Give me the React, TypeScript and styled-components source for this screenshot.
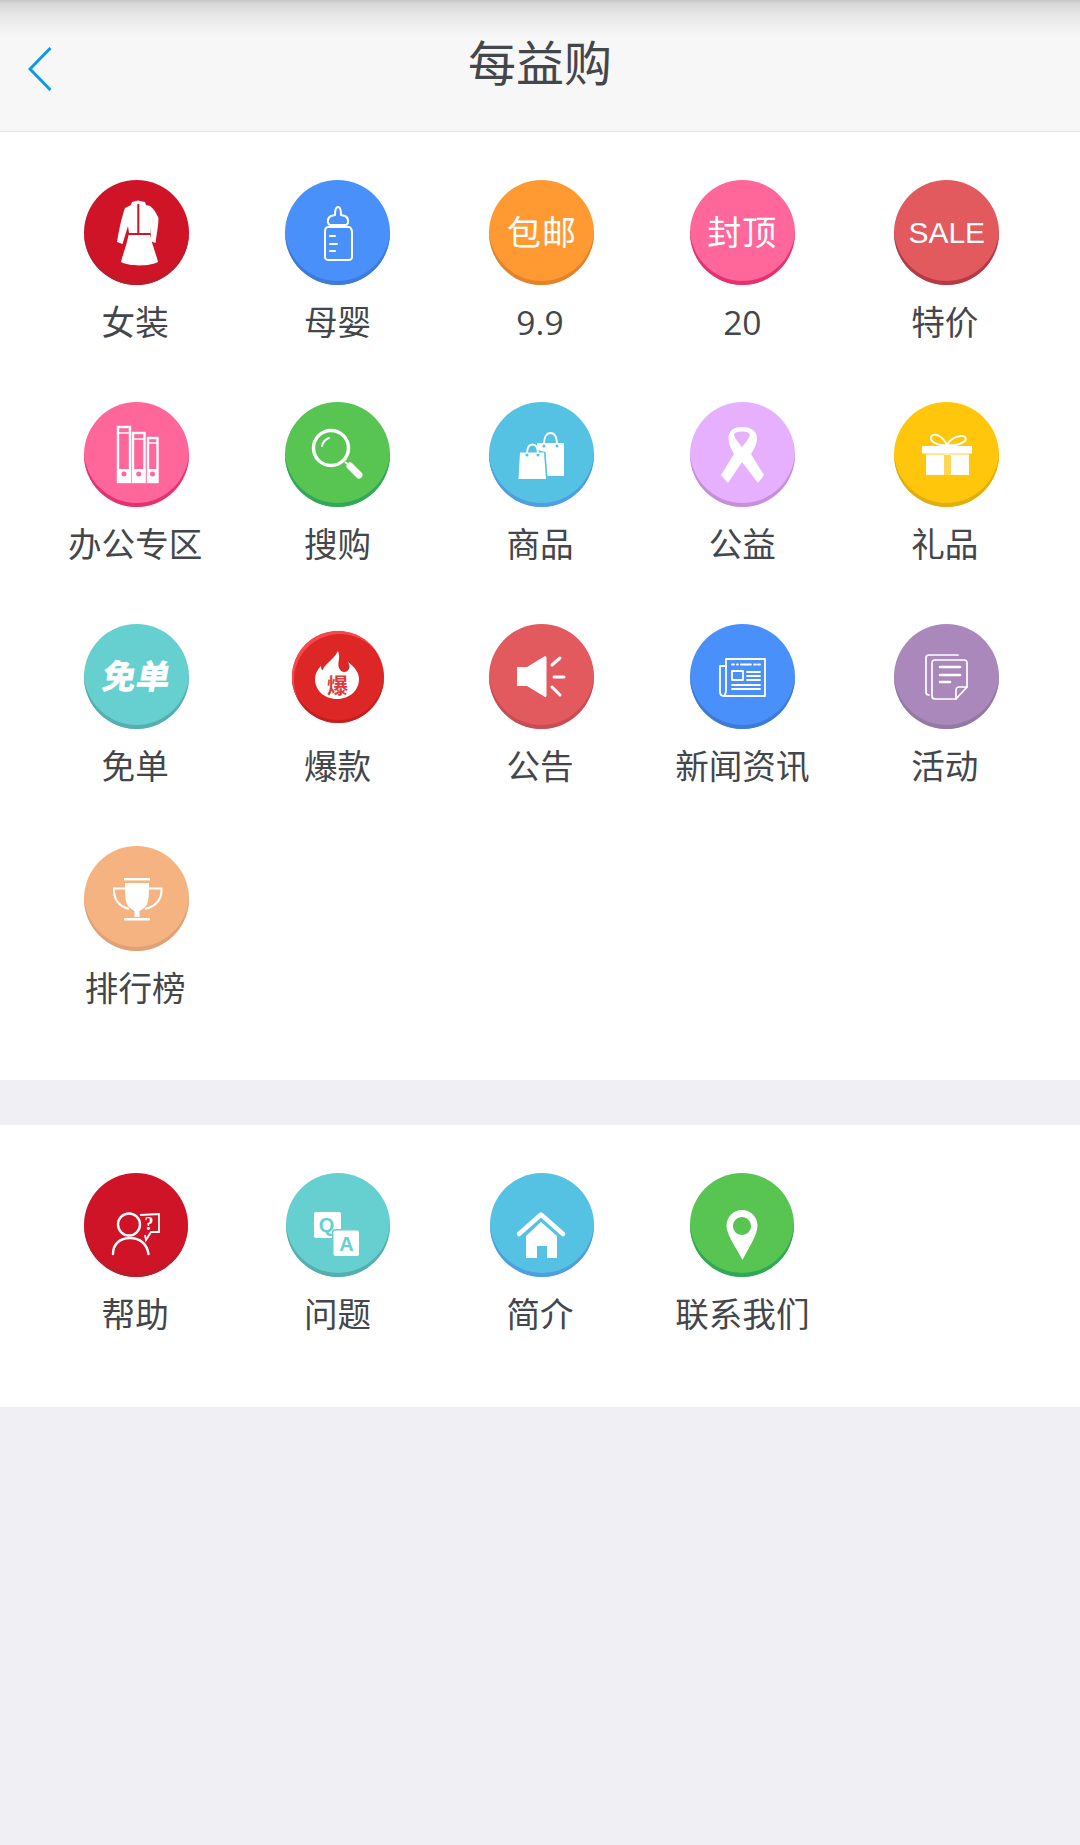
import React from 'react';
import styled, { createGlobalStyle } from 'styled-components';

const Global = createGlobalStyle`
  html, body { margin: 0; padding: 0; background: #efeff4; }
  body { font-family: "Noto Sans CJK SC", "Noto Sans", sans-serif; color: #3e4145; }
  * { box-sizing: border-box; }
`;

const Page = styled.div`
  width: 1080px;
  min-height: 1845px;
  background: #efeff4;
`;

const Header = styled.header`
  height: 132px;
  display: grid;
  grid-template-columns: 1fr auto 1fr;
  align-items: start;
  padding-left: 28px;
  border-bottom: 1px solid #e5e5e5;
  background: linear-gradient(#c6c6c6 0, #d8d8d8 4px, #e8e8e8 16px, #f7f7f7 38px);
`;

const Back = styled.svg`
  width: 24px;
  height: 44px;
  margin-top: 47px;
`;

const Title = styled.h1`
  margin: 26px 28px 0 0;
  font-size: 48px;
  line-height: 68px;
  font-weight: 400;
  color: #43464a;
`;

const Section = styled.section<{ $gap?: number }>`
  background: #fff;
  padding: 48px 34px 12px;
  margin-top: ${p => p.$gap ?? 0}px;
  display: grid;
  grid-template-columns: repeat(5, 202.4px);
  grid-auto-rows: 222px;
`;

const Cell = styled.div`
  display: flex;
  flex-direction: column;
  align-items: center;
`;

const Badge = styled.div<{ $bg: string; $edge: string; $nudge: number; $size: number }>`
  width: ${p => p.$size}px;
  height: ${p => p.$size}px;
  margin-left: ${p => p.$nudge * 2}px;
  border-radius: 50%;
  background: ${p => p.$bg};
  box-shadow: inset 0 -4px 0 ${p => p.$edge};
  display: flex;
  align-items: center;
  justify-content: center;
  color: #fff;
`;

const SmallBadge = styled.div`
  width: 105px;
  height: 105px;
  display: flex;
  align-items: center;
  justify-content: center;
`;

const Flame = styled.div`
  position: relative;
  width: 92px;
  height: 92px;
  border-radius: 50%;
  background: #dd2626;
  box-shadow: inset 2px 3px 0 #f94848, inset 0 -3px 0 #c41f20;
`;

const Icon = styled.svg`
  display: block;
  width: 105px;
  height: 105px;
  flex: none;
`;

const FlameIcon = styled.svg`
  position: absolute;
  left: -6.5px;
  top: -8px;
  width: 105px;
  height: 105px;
`;

const BadgeText = styled.span`
  font-size: 34px;
  line-height: 40px;
  letter-spacing: 1px;
  color: #fff;
  margin-top: -3px;
`;

const SaleText = styled.span`
  font-family: "Liberation Sans", Arial, sans-serif;
  font-size: 30px;
  line-height: 36px;
  color: #fff;
`;

const FreeText = styled.span`
  font-size: 34px;
  line-height: 40px;
  font-weight: 900;
  color: #fff;
  transform: skewX(-10deg);
  margin: -3px 0 0 2px;
`;

const Label = styled.div`
  margin-top: 16px;
  font-family: "Open Sans", "Noto Sans CJK SC", sans-serif;
  font-size: 33.6px;
  line-height: 43px;
  white-space: nowrap;
  color: #43464a;
`;

const W = { fill: '#fff' } as const;
const S = { fill: 'none', stroke: '#fff', strokeWidth: 2, strokeLinecap: 'round' as const, strokeLinejoin: 'round' as const };

const Dress = () => (
  <Icon viewBox="0 0 105 105">
    <path {...W} d="M48 22 L54 20.5 L61 22 L62 25 L66 26 C69 28 72 32 74.5 38 C74.5 46 72.5 54 71.5 63 L66.5 61 L67 46 L66.5 53 L45 53 L44 46 L38.5 64 L33 62 C35 50 38 36 41 28 L47 25 Z" />
    <path fill="#d01428" d="M53.3 24 h2 v29 h-2 Z" />
    <path {...W} d="M44.5 55 L66 55 C68 64 72 74 74 82 C66 86.5 45 86.5 37 82 C39 74 43 64 44.5 55 Z" />
  </Icon>
);

const Bottle = () => (
  <Icon viewBox="0 0 105 105">
    <g {...S}>
      <path d="M50 35 C50 31 51 27 53 27 C55 27 56 31 56 35 L60 36 C64 38 64 44 61 45 L45 45 C42 44 42 38 46 36 Z" />
      <path d="M43 47 L64 47 C65 47 67 49 67 52 L67 77 C67 79 65 80 63 80 L44 80 C42 80 40 79 40 77 L40 52 C40 49 41 47 43 47 Z" />
      <path d="M45 56 h5 M45 64 h7 M45 71 h5" />
    </g>
  </Icon>
);

const Binders = () => (
  <Icon viewBox="0 0 105 105">
    <g fill="none" stroke="#fff" strokeWidth="2.4">
      <rect x="34" y="25" width="12" height="55" />
      <rect x="49" y="31" width="11.5" height="49" />
      <rect x="64" y="36" width="9.5" height="44" />
      <path d="M34 31 h12 M49 37 h11.5 M64 41 h9.5" strokeWidth="1.6" />
    </g>
    <path {...W} d="M33 67 h14 v14 h-14 Z M48 67 h13.5 v14 h-13.5 Z M63 67 h11 v14 h-11 Z" />
    <circle cx="40" cy="72" r="2.5" fill="#ff6699" />
    <circle cx="54.7" cy="72" r="2.5" fill="#ff6699" />
    <circle cx="68.5" cy="72" r="2.5" fill="#ff6699" />
  </Icon>
);

const Search = () => (
  <Icon viewBox="0 0 105 105">
    <circle cx="46" cy="46" r="17.5" fill="none" stroke="#fff" strokeWidth="3.5" />
    <path d="M37 44 C38 40 41 37 44 36" fill="none" stroke="#fff" strokeWidth="2" strokeLinecap="round" />
    <path d="M60 60 L65 64" stroke="#fff" strokeWidth="2" />
    <path d="M65 64 L74 73" stroke="#fff" strokeWidth="7" strokeLinecap="round" />
  </Icon>
);

const Bags = () => (
  <Icon viewBox="0 0 105 105">
    <path {...W} d="M48 41 L75 41 L75 74 L58.5 74 L56.5 50 L48.5 48 Z" />
    <path {...W} d="M31 50.5 L55 50.5 L57 77 L29.5 77 Z" />
    <path d="M55 43 C55 34 58 31 61.5 31 C65 31 68 34 68 43" fill="none" stroke="#fff" strokeWidth="1.8" />
    <path d="M38 52 C38 45 40 42.5 43.5 42.5 C47 42.5 49 45 49 52" fill="none" stroke="#fff" strokeWidth="1.8" />
    <circle cx="55" cy="44" r="1.5" fill="#56c2e3" />
    <circle cx="68" cy="44" r="1.5" fill="#56c2e3" />
    <circle cx="38" cy="53" r="1.5" fill="#56c2e3" />
    <circle cx="49" cy="53" r="1.5" fill="#56c2e3" />
  </Icon>
);

const Ribbon = () => (
  <Icon viewBox="0 0 105 105">
    <path {...W} fillRule="evenodd" d="M52 25 C60 25 67 28 67 37 C67 42 64 47 61 52 L74 73 L68 81 L52 60 L38 81 L31 73 L44 52 C41 47 38.5 42 38.5 36 C38.5 28 45 25 52 25 Z M52 29.5 C48 29.5 44.5 30.5 44 33 C45 37 49 41 52 45 C55 41 59 37 60 33 C59.5 30.5 56 29.5 52 29.5 Z" />
  </Icon>
);

const Gift = () => (
  <Icon viewBox="0 0 105 105">
    <path d="M53 43 C46 44 38 41 37 37 C36 32 42 32 45 34 C49 36 51 39 53 43 C55 39 60 35 66 34 C71 33 73 36 71 39 C68 42 60 44 53 43 Z" fill="none" stroke="#fff" strokeWidth="1.8" />
    <rect {...W} x="28" y="44" width="50" height="7.5" />
    <rect {...W} x="32" y="53" width="18" height="20" />
    <rect {...W} x="57" y="53" width="18" height="20" />
    <rect x="50" y="44" width="7" height="29" fill="#fff" opacity=".3" />
    <rect x="32" y="51.5" width="43" height="1.5" fill="#fff" opacity=".55" />
  </Icon>
);

const FlameGlyph = () => (
  <FlameIcon viewBox="0 0 105 105">
    <path {...W} d="M53 28 C56 35 52 39 54 45 C56 50 62 50 64 46 C65 43 64 41 63 39 C70 44 74 50 74 56 C74 67 65 76 52 76 C39 76 30 67 30 56 C30 51 32 47 36 43 C36 46 37 47 38 47 C39 41 48 38 53 28 Z" />
    <text x="52.5" y="70" textAnchor="middle" fontSize="21" fontWeight="700" fill="#dd3a3c" fontFamily='"Noto Sans CJK SC", sans-serif'>爆</text>
  </FlameIcon>
);

const Speaker = () => (
  <Icon viewBox="0 0 105 105">
    <path {...W} d="M28 43 L38 43 L56 32 C57 32 57.5 33 57.5 34 L57.5 71 C57.5 72.5 57 73 56 73 L38 62 L28 62 Z" />
    <path d="M63 41 L71 34 M65 53 L75 53 M63 63 L71 71" stroke="#fff" strokeWidth="3" strokeLinecap="round" />
  </Icon>
);

const News = () => (
  <Icon viewBox="0 0 105 105">
    <g {...S} strokeWidth="1.8">
      <path d="M36 35 L75 35 L75 72 L34 72 C31 72 30 70 30 68 L30 42 L35 42" />
      <path d="M36 35 L36 67 C36 70 35 71 34 72" />
      <rect x="42" y="47" width="11" height="9" />
      <path d="M57 48 h13 M57 52 h13 M57 56 h13 M42 61 h28 M42 65 h28" />
      <path d="M42 40.5 h2 M47 40.5 h1 M51 40.5 h10 M64 40.5 h2 M68 40.5 h2" />
    </g>
  </Icon>
);

const Papers = () => (
  <Icon viewBox="0 0 105 105">
    <g {...S} strokeWidth="1.7">
      <path d="M64 31 L35 31 C33 31 32 32 32 34 L32 68 C32 70 33 71 35 71" />
      <path d="M41 36 L70 36 C72 36 73 37 73 39 L73 63 L62 75 L41 75 C39 75 38 74 38 72 L38 39 C38 37 39 36 41 36 Z" />
      <path d="M73 63 L65 63 C63 63 62 65 62 66 L62 75" />
    </g>
    <path d="M46 43 h20 M46 51 h20 M46 58 h10" stroke="#fff" strokeWidth="2.6" strokeLinecap="round" />
  </Icon>
);

const Trophy = () => (
  <Icon viewBox="0 0 105 105">
    <rect {...W} x="40" y="32" width="26" height="2.4" />
    <path {...W} d="M41 37 L65 37 C65 52 64.5 59 60 62 L55.5 65 L55.5 71 L50.5 71 L50.5 65 L46 62 C41.5 59 41 52 41 37 Z" />
    <path d="M41 42.5 L30 42.5 C29.5 53 34 60 45 63 M65 42.5 L77.5 42.5 C78 53 73 60 61 63" fill="none" stroke="#fff" strokeWidth="2" />
    <rect {...W} x="40" y="72" width="26" height="2.6" rx="1" />
  </Icon>
);

const Helper = () => (
  <Icon viewBox="0 0 105 105">
    <circle cx="45" cy="51.5" r="11" fill="none" stroke="#fff" strokeWidth="2.4" />
    <path d="M29 81 C29 71 36 65 46 65 C56 65 63 71 64.5 81" fill="none" stroke="#fff" strokeWidth="2.4" strokeLinecap="round" />
    <path d="M56 42 L75 41 L75 59 L67 59 L62 67 L61 62" fill="none" stroke="#fff" strokeWidth="1.8" />
    <text x="65" y="57" textAnchor="middle" fontSize="18" fontWeight="700" fill="#fff" fontFamily='"Liberation Serif", serif'>?</text>
  </Icon>
);

const QA = () => (
  <Icon viewBox="0 0 105 105">
    <rect {...W} x="29" y="39" width="27" height="26" rx="2" />
    <text x="41.5" y="59" textAnchor="middle" fontSize="20" fontWeight="700" fill="#66cfcf" fontFamily='"Liberation Sans", sans-serif'>Q</text>
    <rect x="47" y="56" width="28.5" height="28" rx="3" fill="#66cfcf" />
    <rect {...W} x="48.5" y="57.5" width="25.5" height="25.5" rx="2" />
    <text x="61.5" y="78" textAnchor="middle" fontSize="20" fontWeight="700" fill="#66cfcf" fontFamily='"Liberation Sans", sans-serif'>A</text>
  </Icon>
);

const Home = () => (
  <Icon viewBox="0 0 105 105">
    <path d="M30 61 L52 41.5 L74 61" fill="none" stroke="#fff" strokeWidth="4.5" strokeLinecap="round" strokeLinejoin="round" />
    <path {...W} d="M37 63 L52 49 L68 63 L68 85 L58 85 L58 73 L48 73 L48 85 L37 85 Z" />
  </Icon>
);

const Pin = () => (
  <Icon viewBox="0 0 105 105">
    <path {...W} fillRule="evenodd" d="M52 37 C61 37 67.5 44 67.5 53 C67.5 62 58 76 52.5 87 C47 76 36.5 62 36.5 53 C36.5 44 43 37 52 37 Z M52 44 C47 44 43 48 43 53 C43 58 47 62 52 62 C57 62 61 58 61 53 C61 48 57 44 52 44 Z" />
  </Icon>
);

type Item = { label: string; bg?: string; edge?: string; content?: React.ReactNode; hot?: boolean };

const RED = { bg: '#d01428', edge: '#bd1a2a' };
const BLUE = { bg: '#4a90fb', edge: '#3f7bd6' };
const ORANGE = { bg: '#ff9a33', edge: '#e2832b' };
const PINK = { bg: '#ff6699', edge: '#e6316f' };
const CORAL = { bg: '#e2595e', edge: '#b53a47' };
const GREEN = { bg: '#58c452', edge: '#2fa85a' };
const SKY = { bg: '#56c2e3', edge: '#4f9ee2' };
const TEAL = { bg: '#66cfcf', edge: '#56aeae' };

const mainItems: Item[] = [
  { label: '女装', ...RED, content: <Dress /> },
  { label: '母婴', ...BLUE, content: <Bottle /> },
  { label: '9.9', ...ORANGE, content: <BadgeText>包邮</BadgeText> },
  { label: '20', ...PINK, content: <BadgeText>封顶</BadgeText> },
  { label: '特价', ...CORAL, content: <SaleText>SALE</SaleText> },
  { label: '办公专区', ...PINK, content: <Binders /> },
  { label: '搜购', ...GREEN, content: <Search /> },
  { label: '商品', ...SKY, content: <Bags /> },
  { label: '公益', bg: '#e6b0ff', edge: '#c68fdc', content: <Ribbon /> },
  { label: '礼品', bg: '#ffc60b', edge: '#e0ae10', content: <Gift /> },
  { label: '免单', ...TEAL, content: <FreeText>免单</FreeText> },
  { label: '爆款', hot: true },
  { label: '公告', bg: '#e2595e', edge: '#c94c55', content: <Speaker /> },
  { label: '新闻资讯', ...BLUE, content: <News /> },
  { label: '活动', bg: '#aa88bb', edge: '#937aa3', content: <Papers /> },
  { label: '排行榜', bg: '#f6b382', edge: '#e0a176', content: <Trophy /> },
];

const moreItems: Item[] = [
  { label: '帮助', ...RED, content: <Helper /> },
  { label: '问题', ...TEAL, content: <QA /> },
  { label: '简介', ...SKY, content: <Home /> },
  { label: '联系我们', ...GREEN, content: <Pin /> },
];

const NUDGES = [1, 0, 2, 0, 2];

const Tile = ({ item, column, size }: { item: Item; column: number; size: number }) => (
  <Cell>
    {item.hot ? (
      <SmallBadge>
        <Flame>
          <FlameGlyph />
        </Flame>
      </SmallBadge>
    ) : (
      <Badge $bg={item.bg as string} $edge={item.edge as string} $nudge={NUDGES[column]} $size={size}>
        {item.content}
      </Badge>
    )}
    <Label>{item.label}</Label>
  </Cell>
);

export default function App() {
  return (
    <Page>
      <Global />
      <Header>
        <Back viewBox="0 0 24 44">
          <path d="M22.5 1 L2 22 L22.5 43" fill="none" stroke="#0a9be8" strokeWidth="3" />
        </Back>
        <Title>每益购</Title>
      </Header>
      <Section>
        {mainItems.map((item, i) => <Tile key={item.label} item={item} column={i % 5} size={105} />)}
      </Section>
      <Section $gap={45}>
        {moreItems.map((item, i) => <Tile key={item.label} item={item} column={i % 5} size={104} />)}
      </Section>
    </Page>
  );
}
